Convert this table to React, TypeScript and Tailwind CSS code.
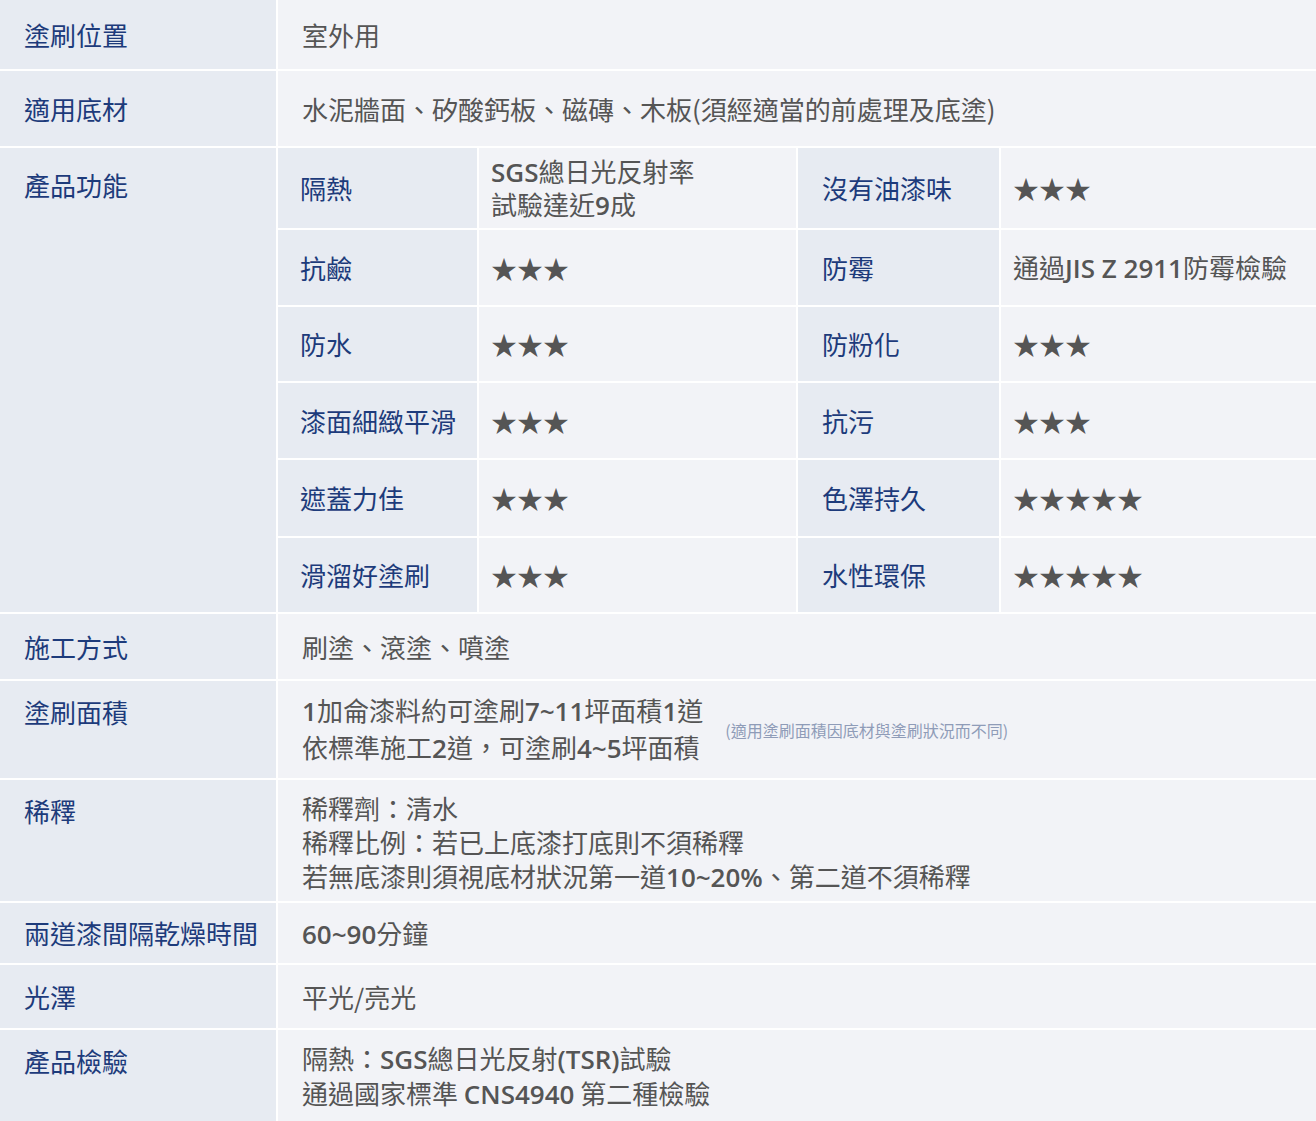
import React from 'react';

const labelCls = "bg-[#e7ebf2] text-[#1d3b7b]";
const valueCls = "bg-[#f2f3f7] text-[#555555]";

// latin / digits in a wider semibold face
function L({ children }: { children: React.ReactNode }) {
  return <span className="font-['Open_Sans',sans-serif] font-semibold">{children}</span>;
}

function Stars({ n }: { n: number }) {
  return <span className="text-[#555555]">{'★'.repeat(n)}</span>;
}

const features: [React.ReactNode, React.ReactNode, React.ReactNode, React.ReactNode, number][] = [
  [
    '隔熱',
    <div className="leading-[32px]">
      <div><L>SGS</L>總日光反射率</div>
      <div>試驗達近<L>9</L>成</div>
    </div>,
    '沒有油漆味',
    <Stars n={3} />,
    80,
  ],
  ['抗鹼', <Stars n={3} />, '防霉', <span>通過<L>JIS Z 2911</L>防霉檢驗</span>, 75],
  ['防水', <Stars n={3} />, '防粉化', <Stars n={3} />, 74],
  ['漆面細緻平滑', <Stars n={3} />, '抗污', <Stars n={3} />, 75],
  ['遮蓋力佳', <Stars n={3} />, '色澤持久', <Stars n={5} />, 76],
  ['滑溜好塗刷', <Stars n={3} />, '水性環保', <Stars n={5} />, 74],
];

function Row({ label, h, top, children }: { label: string; h: number; top?: number; children: React.ReactNode }) {
  return (
    <div className="grid grid-cols-[276px_1fr] gap-[2px]" style={{ height: h }}>
      <div
        className={`${labelCls} pl-6 whitespace-nowrap flex ${top === undefined ? 'items-center' : 'items-start'}`}
        style={top === undefined ? undefined : { paddingTop: top }}
      >
        {label}
      </div>
      <div
        className={`${valueCls} px-6 flex ${top === undefined ? 'items-center' : 'items-start'}`}
        style={top === undefined ? undefined : { paddingTop: top - 3 }}
      >
        {children}
      </div>
    </div>
  );
}

export default function App() {
  return (
    <div className="min-h-screen w-full bg-white font-['Noto_Sans_CJK_TC',sans-serif] text-[26px] leading-[34px]">
      <div className="flex flex-col gap-[2px]">
        <Row label="塗刷位置" h={69}>室外用</Row>
        <Row label="適用底材" h={75}>水泥牆面、矽酸鈣板、磁磚、木板(須經適當的前處理及底塗)</Row>

        {/* 產品功能: nested grid */}
        <div className="grid grid-cols-[276px_1fr] gap-[2px]">
          <div className={`${labelCls} px-6 pt-[20px]`}>產品功能</div>
          <div className="grid grid-cols-[199px_317px_201px_1fr] gap-[2px]">
            {features.map(([a, b, c, d, h], i) => (
              <React.Fragment key={i}>
                <div className={`${labelCls} pl-[22px] flex items-center`} style={{ height: h }}>{a}</div>
                <div className={`${valueCls} pl-3 flex items-center`} style={{ height: h }}>{b}</div>
                <div className={`${labelCls} pl-6 flex items-center`} style={{ height: h }}>{c}</div>
                <div className={`${valueCls} pl-3 flex items-center`} style={{ height: h }}>{d}</div>
              </React.Fragment>
            ))}
          </div>
        </div>

        <Row label="施工方式" h={65}>刷塗、滾塗、噴塗</Row>

        <Row label="塗刷面積" h={97} top={14}>
          <div className="flex items-center gap-[22px]">
            <div className="leading-[35px]">
              <div><L>1</L>加侖漆料約可塗刷<L>7~11</L>坪面積<L>1</L>道</div>
              <div>依標準施工<L>2</L>道，可塗刷<L>4~5</L>坪面積</div>
            </div>
            <div className="text-[16px] leading-[20px] text-[#8f9cb8] pt-[2px]">(適用塗刷面積因底材與塗刷狀況而不同)</div>
          </div>
        </Row>

        <Row label="稀釋" h={121} top={14}>
          <div>
            <div>稀釋劑：清水</div>
            <div>稀釋比例：若已上底漆打底則不須稀釋</div>
            <div>若無底漆則須視底材狀況第一道<L>10~20%</L>、第二道不須稀釋</div>
          </div>
        </Row>

        <Row label="兩道漆間隔乾燥時間" h={60}><span><L>60~90</L>分鐘</span></Row>
        <Row label="光澤" h={63}>平光/亮光</Row>

        <Row label="產品檢驗" h={100} top={14}>
          <div>
            <div>隔熱：<L>SGS</L>總日光反射<L>(TSR)</L>試驗</div>
            <div>通過國家標準 <L>CNS4940</L> 第二種檢驗</div>
          </div>
        </Row>
      </div>
    </div>
  );
}
